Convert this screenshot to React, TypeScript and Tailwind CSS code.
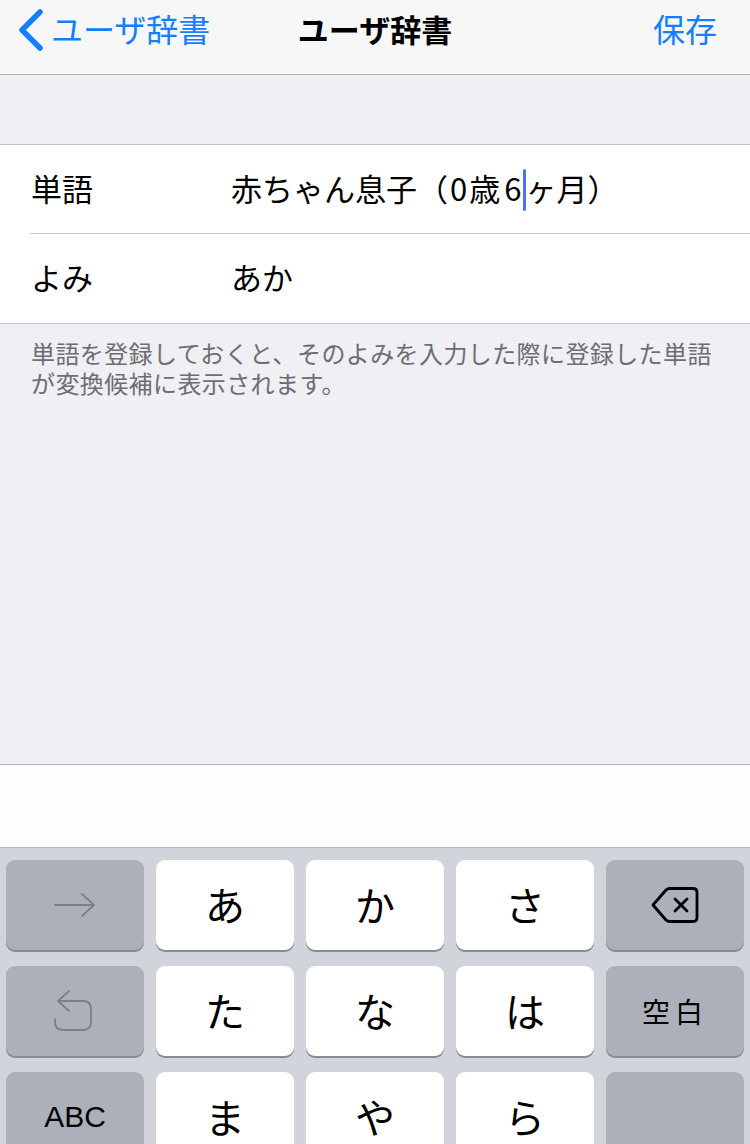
import type { ReactNode } from 'react'

const jp = { fontFamily: '"Noto Sans CJK JP", "Noto Sans", sans-serif' }

function Key({ children, dark = false }: { children?: ReactNode; dark?: boolean }) {
  return (
    <div
      className={`flex h-[90px] w-[138px] items-center justify-center rounded-[9px] shadow-[0_2px_0_#888b91] ${
        dark ? 'bg-[#abb0ba]' : 'bg-white'
      }`}
    >
      {children}
    </div>
  )
}

function Kana({ ch }: { ch: string }) {
  return (
    <Key>
      <span className="mt-[-2px] text-[40px] leading-none text-black">{ch}</span>
    </Key>
  )
}

export default function App() {
  return (
    <div className="flex h-[1144px] w-[750px] flex-col overflow-hidden bg-[#efeff4]" style={jp}>
      {/* nav */}
      <div className="relative flex h-[75px] shrink-0 items-center border-b border-[#b2b2b2] bg-[#f7f7f8]">
        <div className="flex items-center pl-[17px] text-[#157efb]">
          <svg width="28" height="42" viewBox="0 0 28 42" className="mb-[14px]">
            <path d="M23 3 L5 21 L23 39" fill="none" stroke="#157efb" strokeWidth="5.5" strokeLinecap="round" strokeLinejoin="round" />
          </svg>
          <span className="mb-[18px] ml-[6px] text-[32px] leading-none">ユーザ辞書</span>
        </div>
        <div className="absolute left-0 right-0 top-0 flex h-[56px] items-center justify-center">
          <span className="text-[31px] font-bold leading-none text-black">ユーザ辞書</span>
        </div>
        <span className="mb-[18px] ml-auto pr-[33px] text-[32px] leading-none text-[#157efb]">保存</span>
      </div>

      <div className="h-[69px] shrink-0" />

      {/* form */}
      <div className="shrink-0 border-y border-[#c8c7cc] bg-white">
        <div className="flex h-[88px] items-center pb-[4px] pl-[31px] text-[31px] text-black">
          <span className="w-[200px] leading-none">単語</span>
          <span className="leading-none">
            赤ちゃん息子（<span className="px-[2px]">0</span>歳<span className="pl-[4px] pr-[4px]">6</span>
            <span className="relative inline-block w-0">
              <span className="absolute left-[-2px] top-[-32px] h-[42px] w-[3px] rounded-full bg-[#4a74f2]" />
            </span>
            ヶ月）
          </span>
        </div>
        <div className="ml-[30px] h-px bg-[#c8c7cc]" />
        <div className="flex h-[89px] items-center pb-[4px] pl-[31px] text-[31px] text-black">
          <span className="w-[200px] leading-none">よみ</span>
          <span className="leading-none">あか</span>
        </div>
      </div>

      <p className="shrink-0 px-[31px] pt-[14px] text-[24px] leading-[30px] tracking-[0.4px] text-[#6d6d72]">
        単語を登録しておくと、そのよみを入力した際に登録した単語が変換候補に表示されます。
      </p>

      <div className="flex-1" />

      {/* candidate bar */}
      <div className="h-[84px] shrink-0 border-y border-[#b4b6bd] bg-[#fdfdfe]" />

      {/* keyboard */}
      <div className="flex h-[296px] shrink-0 flex-col gap-[16px] bg-[#d1d4db] px-[6px] pt-[12px]">
        <div className="flex gap-[12px]">
          <Key dark>
            <svg width="42" height="26" viewBox="0 0 42 26">
              <path d="M1 13 H40 M28 2 L40 13 L28 24" fill="none" stroke="#7b7f87" strokeWidth="1.8" strokeLinecap="round" strokeLinejoin="round" />
            </svg>
          </Key>
          <Kana ch="あ" />
          <Kana ch="か" />
          <Kana ch="さ" />
          <Key dark>
            <svg width="50" height="38" viewBox="0 0 50 38">
              <path
                d="M3 19 L16 4 Q17.5 2.5 20 2.5 H43 Q47 2.5 47 6.5 V31.5 Q47 35.5 43 35.5 H20 Q17.5 35.5 16 34 Z"
                fill="none"
                stroke="#000"
                strokeWidth="2.8"
                strokeLinejoin="round"
              />
              <path d="M25 13 L37 25 M37 13 L25 25" stroke="#000" strokeWidth="2.8" strokeLinecap="round" />
            </svg>
          </Key>
        </div>
        <div className="flex gap-[12px]">
          <Key dark>
            <svg width="44" height="44" viewBox="0 0 44 44">
              <path
                d="M16 2 L5 12 L16 22 M5 12 H30 Q38 12 38 20 V33 Q38 41 30 41 H10 Q2 41 2 33 V30"
                fill="none"
                stroke="#7b7f87"
                strokeWidth="1.8"
                strokeLinecap="round"
                strokeLinejoin="round"
              />
            </svg>
          </Key>
          <Kana ch="た" />
          <Kana ch="な" />
          <Kana ch="は" />
          <Key dark>
            <span className="text-[28px] leading-none tracking-[5px] text-black">空白</span>
          </Key>
        </div>
        <div className="flex gap-[12px]">
          <Key dark>
            <span className="text-[30px] leading-none text-black" style={{ fontFamily: '"Liberation Sans", Arial, sans-serif' }}>
              ABC
            </span>
          </Key>
          <Kana ch="ま" />
          <Kana ch="や" />
          <Kana ch="ら" />
          <Key dark />
        </div>
      </div>
    </div>
  )
}
